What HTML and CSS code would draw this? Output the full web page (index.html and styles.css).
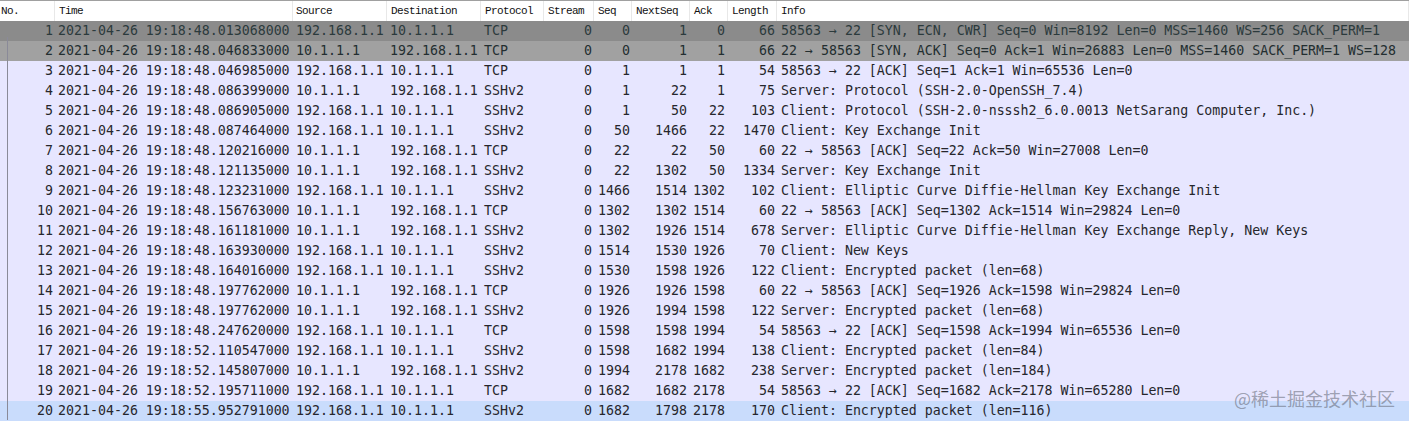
FILE: index.html
```html
<!DOCTYPE html>
<html lang="en">
<head>
<meta charset="utf-8">
<title>Packet list</title>
<link rel="stylesheet" href="styles.css">
</head>
<body>
<div class="list">
<div class="row head"><span>No.</span><span>Time</span><span>Source</span><span>Destination</span><span>Protocol</span><span>Stream</span><span>Seq</span><span>NextSeq</span><span>Ack</span><span>Length</span><span>Info</span></div>
<div class="row syn1"><span class="n">1</span><span>2021-04-26 19:18:48.013068000</span><span>192.168.1.1</span><span>10.1.1.1</span><span>TCP</span><span class="n">0</span><span class="n">0</span><span class="n">1</span><span class="n">0</span><span class="n">66</span><span>58563 → 22 [SYN, ECN, CWR] Seq=0 Win=8192 Len=0 MSS=1460 WS=256 SACK_PERM=1</span></div>
<div class="row syn2"><span class="n">2</span><span>2021-04-26 19:18:48.046833000</span><span>10.1.1.1</span><span>192.168.1.1</span><span>TCP</span><span class="n">0</span><span class="n">0</span><span class="n">1</span><span class="n">1</span><span class="n">66</span><span>22 → 58563 [SYN, ACK] Seq=0 Ack=1 Win=26883 Len=0 MSS=1460 SACK_PERM=1 WS=128</span></div>
<div class="row"><span class="n">3</span><span>2021-04-26 19:18:48.046985000</span><span>192.168.1.1</span><span>10.1.1.1</span><span>TCP</span><span class="n">0</span><span class="n">1</span><span class="n">1</span><span class="n">1</span><span class="n">54</span><span>58563 → 22 [ACK] Seq=1 Ack=1 Win=65536 Len=0</span></div>
<div class="row"><span class="n">4</span><span>2021-04-26 19:18:48.086399000</span><span>10.1.1.1</span><span>192.168.1.1</span><span>SSHv2</span><span class="n">0</span><span class="n">1</span><span class="n">22</span><span class="n">1</span><span class="n">75</span><span>Server: Protocol (SSH-2.0-OpenSSH_7.4)</span></div>
<div class="row"><span class="n">5</span><span>2021-04-26 19:18:48.086905000</span><span>192.168.1.1</span><span>10.1.1.1</span><span>SSHv2</span><span class="n">0</span><span class="n">1</span><span class="n">50</span><span class="n">22</span><span class="n">103</span><span>Client: Protocol (SSH-2.0-nsssh2_6.0.0013 NetSarang Computer, Inc.)</span></div>
<div class="row"><span class="n">6</span><span>2021-04-26 19:18:48.087464000</span><span>192.168.1.1</span><span>10.1.1.1</span><span>SSHv2</span><span class="n">0</span><span class="n">50</span><span class="n">1466</span><span class="n">22</span><span class="n">1470</span><span>Client: Key Exchange Init</span></div>
<div class="row"><span class="n">7</span><span>2021-04-26 19:18:48.120216000</span><span>10.1.1.1</span><span>192.168.1.1</span><span>TCP</span><span class="n">0</span><span class="n">22</span><span class="n">22</span><span class="n">50</span><span class="n">60</span><span>22 → 58563 [ACK] Seq=22 Ack=50 Win=27008 Len=0</span></div>
<div class="row"><span class="n">8</span><span>2021-04-26 19:18:48.121135000</span><span>10.1.1.1</span><span>192.168.1.1</span><span>SSHv2</span><span class="n">0</span><span class="n">22</span><span class="n">1302</span><span class="n">50</span><span class="n">1334</span><span>Server: Key Exchange Init</span></div>
<div class="row"><span class="n">9</span><span>2021-04-26 19:18:48.123231000</span><span>192.168.1.1</span><span>10.1.1.1</span><span>SSHv2</span><span class="n">0</span><span class="n">1466</span><span class="n">1514</span><span class="n">1302</span><span class="n">102</span><span>Client: Elliptic Curve Diffie-Hellman Key Exchange Init</span></div>
<div class="row"><span class="n">10</span><span>2021-04-26 19:18:48.156763000</span><span>10.1.1.1</span><span>192.168.1.1</span><span>TCP</span><span class="n">0</span><span class="n">1302</span><span class="n">1302</span><span class="n">1514</span><span class="n">60</span><span>22 → 58563 [ACK] Seq=1302 Ack=1514 Win=29824 Len=0</span></div>
<div class="row"><span class="n">11</span><span>2021-04-26 19:18:48.161181000</span><span>10.1.1.1</span><span>192.168.1.1</span><span>SSHv2</span><span class="n">0</span><span class="n">1302</span><span class="n">1926</span><span class="n">1514</span><span class="n">678</span><span>Server: Elliptic Curve Diffie-Hellman Key Exchange Reply, New Keys</span></div>
<div class="row"><span class="n">12</span><span>2021-04-26 19:18:48.163930000</span><span>192.168.1.1</span><span>10.1.1.1</span><span>SSHv2</span><span class="n">0</span><span class="n">1514</span><span class="n">1530</span><span class="n">1926</span><span class="n">70</span><span>Client: New Keys</span></div>
<div class="row"><span class="n">13</span><span>2021-04-26 19:18:48.164016000</span><span>192.168.1.1</span><span>10.1.1.1</span><span>SSHv2</span><span class="n">0</span><span class="n">1530</span><span class="n">1598</span><span class="n">1926</span><span class="n">122</span><span>Client: Encrypted packet (len=68)</span></div>
<div class="row"><span class="n">14</span><span>2021-04-26 19:18:48.197762000</span><span>10.1.1.1</span><span>192.168.1.1</span><span>TCP</span><span class="n">0</span><span class="n">1926</span><span class="n">1926</span><span class="n">1598</span><span class="n">60</span><span>22 → 58563 [ACK] Seq=1926 Ack=1598 Win=29824 Len=0</span></div>
<div class="row"><span class="n">15</span><span>2021-04-26 19:18:48.197762000</span><span>10.1.1.1</span><span>192.168.1.1</span><span>SSHv2</span><span class="n">0</span><span class="n">1926</span><span class="n">1994</span><span class="n">1598</span><span class="n">122</span><span>Server: Encrypted packet (len=68)</span></div>
<div class="row"><span class="n">16</span><span>2021-04-26 19:18:48.247620000</span><span>192.168.1.1</span><span>10.1.1.1</span><span>TCP</span><span class="n">0</span><span class="n">1598</span><span class="n">1598</span><span class="n">1994</span><span class="n">54</span><span>58563 → 22 [ACK] Seq=1598 Ack=1994 Win=65536 Len=0</span></div>
<div class="row"><span class="n">17</span><span>2021-04-26 19:18:52.110547000</span><span>192.168.1.1</span><span>10.1.1.1</span><span>SSHv2</span><span class="n">0</span><span class="n">1598</span><span class="n">1682</span><span class="n">1994</span><span class="n">138</span><span>Client: Encrypted packet (len=84)</span></div>
<div class="row"><span class="n">18</span><span>2021-04-26 19:18:52.145807000</span><span>10.1.1.1</span><span>192.168.1.1</span><span>SSHv2</span><span class="n">0</span><span class="n">1994</span><span class="n">2178</span><span class="n">1682</span><span class="n">238</span><span>Server: Encrypted packet (len=184)</span></div>
<div class="row"><span class="n">19</span><span>2021-04-26 19:18:52.195711000</span><span>192.168.1.1</span><span>10.1.1.1</span><span>TCP</span><span class="n">0</span><span class="n">1682</span><span class="n">1682</span><span class="n">2178</span><span class="n">54</span><span>58563 → 22 [ACK] Seq=1682 Ack=2178 Win=65280 Len=0</span></div>
<div class="row last"><span class="n">20</span><span>2021-04-26 19:18:55.952791000</span><span>192.168.1.1</span><span>10.1.1.1</span><span>SSHv2</span><span class="n">0</span><span class="n">1682</span><span class="n">1798</span><span class="n">2178</span><span class="n">170</span><span>Client: Encrypted packet (len=116)</span></div>
<div class="relation"></div>
<div class="mark">@稀土掘金技术社区</div>
</div>
</body>
</html>
```
FILE: styles.css
```css
* { box-sizing: border-box; }
html, body { margin: 0; padding: 0; background: #fff; overflow: hidden; }
.list {
  position: relative;
  width: 1409px;
  height: 422px;
  border-top: 1px solid #a0a0a0;
  font-family: "DejaVu Sans Mono", monospace;
  font-size: 13.28px;
  color: #26262c;
}
.row {
  display: grid;
  grid-template-columns: 55px 238px 94px 94px 63px 50px 38px 58px 38px 49px 1fr;
  height: 20px;
  line-height: 20px;
  background: #e7e6ff;
  white-space: pre;
}
.row > span { padding: 0 2px 0 3px; overflow: hidden; }
.row > span:nth-child(8),
.row > span:nth-child(9) { padding-right: 3px; }
.row > span:nth-child(11) { padding-left: 4px; overflow: visible; }
.n { text-align: right; }
.head {
  background: #fff;
  font-family: "Liberation Mono", monospace;
  font-size: 11px;
  letter-spacing: -0.6px;
  color: #111;
}
.head > span { border-right: 1px solid #e8e8e8; padding-left: 4px; }
.head > span:nth-child(1) { padding-left: 1px; }
.head > span:nth-child(3) { padding-left: 3px; }
.syn1 { background: #8b8b8b; color: #2b3a3c; }
.syn2 { background: #a1a1a1; color: #232e30; }
.last { background: #c9dcfc; }
.relation {
  position: absolute;
  left: 7px;
  top: 36px;
  bottom: 2px;
  width: 1px;
  background: #8a8a98;
}
.mark {
  position: absolute;
  right: 14px;
  top: 385px;
  font-family: "Noto Sans CJK SC", sans-serif;
  font-size: 18px;
  line-height: 24px;
  color: rgba(110, 115, 130, .62);
}
```
